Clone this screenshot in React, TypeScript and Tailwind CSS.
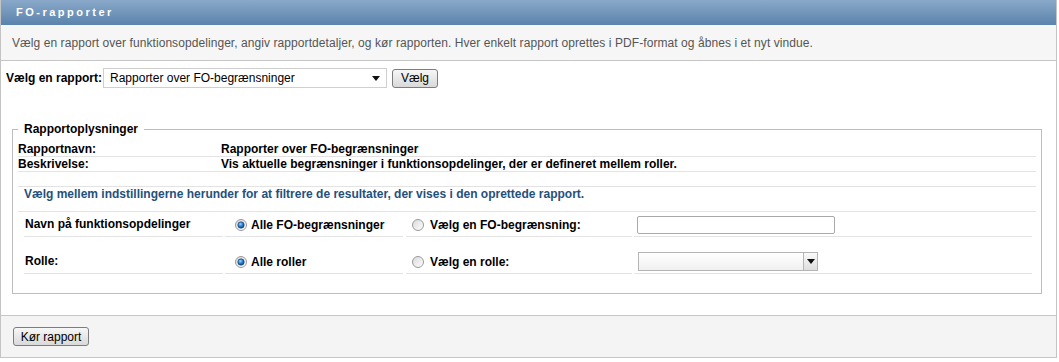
import React from 'react';

function Radio({ checked }: { checked?: boolean }) {
    return (
        <svg width="12" height="12" viewBox="0 0 12 12" className="shrink-0">
            <defs>
                <linearGradient id={checked ? 'rOn' : 'rOff'} x1="0" y1="0" x2="1" y2="1">
                    <stop offset="0" stopColor="#d9d9d9" />
                    <stop offset="1" stopColor="#ffffff" />
                </linearGradient>
                <radialGradient id="dot" cx="0.4" cy="0.35" r="0.7">
                    <stop offset="0" stopColor="#9fd6ff" />
                    <stop offset="0.5" stopColor="#2a7fd0" />
                    <stop offset="1" stopColor="#0a3f7a" />
                </radialGradient>
            </defs>
            <circle cx="6" cy="6" r="5.5" fill={`url(#${checked ? 'rOn' : 'rOff'})`} stroke="#9a9a9a" />
            {checked && <circle cx="6" cy="6" r="3.2" fill="url(#dot)" stroke="#123a66" strokeWidth="0.6" />}
        </svg>
    );
}

function Arrow() {
    return (
        <svg width="8" height="5" viewBox="0 0 8 5">
            <path d="M0 0 H8 L4 5 Z" fill="#111" />
        </svg>
    );
}

function InfoRow({ label, value }: { label: string; value: string }) {
    return (
        <div className="flex h-[15px] items-center border-b border-[#e3e3e3] font-bold leading-[14px]">
            <div className="w-[203px]">{label}</div>
            <div>{value}</div>
        </div>
    );
}

function Cell({ w, h, children }: { w: string; h: string; children?: React.ReactNode }) {
    return (
        <div className={`${w} ${h} flex items-end border-b border-[#e3e3e3] pb-[2px]`}>
            {children}
        </div>
    );
}

export default function App() {
    return (
        <div className="h-[362px] w-[1059px] bg-white font-['Liberation_Sans',Arial,sans-serif] text-[12px] text-black">
            <div className="w-[1057px] border-x border-[#c4c4c4]">
                <div className="h-[25px] bg-linear-to-b from-[#8aa9ca] to-[#5b83ab] pl-[15px] text-[11px] font-bold leading-[25px] tracking-[2.5px] text-white">
                    FO-rapporter
                </div>
                <div className="h-[36px] border-b border-[#c6c6c6] bg-[#f6f6f6] pl-[11px] leading-[36px] tracking-[0.07px] text-[#555]">
                    Vælg en rapport over funktionsopdelinger, angiv rapportdetaljer, og kør rapporten. Hver enkelt rapport oprettes i PDF-format og åbnes i et nyt vindue.
                </div>

                <div className="flex items-center pl-[5px] pt-[7px]">
                    <span className="font-bold">Vælg en rapport:</span>
                    <div className="ml-[1px] flex h-[20px] w-[284px] items-center justify-between border border-[#cfcfcf] bg-white pl-[6px] pr-[6px]">
                        <span>Rapporter over FO-begrænsninger</span>
                        <Arrow />
                    </div>
                    <button className="ml-[5px] h-[19px] w-[46px] rounded-[3px] border border-[#7d7d7d] bg-linear-to-b from-[#f7f7f7] to-[#d9d9d9] text-[12px] leading-[16px]">
                        Vælg
                    </button>
                </div>

                <fieldset className="ml-[11px] mr-[14px] mt-[34px] border border-[#bdbdbd] px-[5px] pb-[19px]">
                    <legend className="px-[6px] font-bold leading-[14px]">Rapportoplysninger</legend>
                    <div className="pt-[6px]">
                        <InfoRow label="Rapportnavn:" value="Rapporter over FO-begrænsninger" />
                        <InfoRow label="Beskrivelse:" value="Vis aktuelle begrænsninger i funktionsopdelinger, der er defineret mellem roller." />
                        <div className="h-[15px] border-b border-[#e3e3e3]" />
                        <div className="h-[25px] border-b border-[#e3e3e3] pl-[6px] font-bold leading-[14px] text-[#24507c]">
                            Vælg mellem indstillingerne herunder for at filtrere de resultater, der vises i den oprettede rapport.
                        </div>

                        <div className="flex pl-[6px] font-bold">
                            <Cell w="w-[199px]" h="h-[25px]">
                                <span className="pb-[1px] pl-[1px]">Navn på funktionsopdelinger</span>
                            </Cell>
                            <div className="w-[2px]" />
                            <Cell w="w-[178px]" h="h-[25px]">
                                <span className="flex items-center gap-[4px] pl-[10px]">
                                    <Radio checked />
                                    <span>Alle FO-begrænsninger</span>
                                </span>
                            </Cell>
                            <div className="w-[3px]" />
                            <Cell w="w-[226px]" h="h-[25px]">
                                <span className="flex items-center gap-[6px] pl-[6px]">
                                    <Radio />
                                    <span>Vælg en FO-begrænsning:</span>
                                </span>
                            </Cell>
                            <div className="w-[2px]" />
                            <Cell w="w-[398px]" h="h-[25px]">
                                <div className="ml-[3px] h-[18px] w-[198px] rounded-[2px] border border-[#a9a9a9] bg-white" />
                            </Cell>
                        </div>

                        <div className="flex pl-[6px] font-bold">
                            <Cell w="w-[199px]" h="h-[37px]">
                                <span className="pb-[1px] pl-[1px]">Rolle:</span>
                            </Cell>
                            <div className="w-[2px]" />
                            <Cell w="w-[178px]" h="h-[37px]">
                                <span className="flex items-center gap-[4px] pl-[10px]">
                                    <Radio checked />
                                    <span>Alle roller</span>
                                </span>
                            </Cell>
                            <div className="w-[3px]" />
                            <Cell w="w-[226px]" h="h-[37px]">
                                <span className="flex items-center gap-[6px] pl-[6px]">
                                    <Radio />
                                    <span>Vælg en rolle:</span>
                                </span>
                            </Cell>
                            <div className="w-[2px]" />
                            <Cell w="w-[398px]" h="h-[37px]">
                                <div className="ml-[4px] flex h-[19px] w-[180px] border border-[#b5b5b5] bg-linear-to-b from-white to-[#f0f0f0]">
                                    <div className="flex-1" />
                                    <div className="flex w-[14px] items-center justify-center border-l border-[#b5b5b5] bg-linear-to-b from-[#fafafa] to-[#dedede]">
                                        <Arrow />
                                    </div>
                                </div>
                            </Cell>
                        </div>
                    </div>
                </fieldset>

                <div className="mt-[21px] h-[43px] border-y border-[#c6c6c6] bg-[#f4f4f4] pl-[12px] pt-[11px]">
                    <button className="h-[19px] w-[76px] rounded-[3px] border border-[#7d7d7d] bg-linear-to-b from-[#f7f7f7] to-[#d9d9d9] text-[12px] leading-[16px]">
                        Kør rapport
                    </button>
                </div>
            </div>
        </div>
    );
}
